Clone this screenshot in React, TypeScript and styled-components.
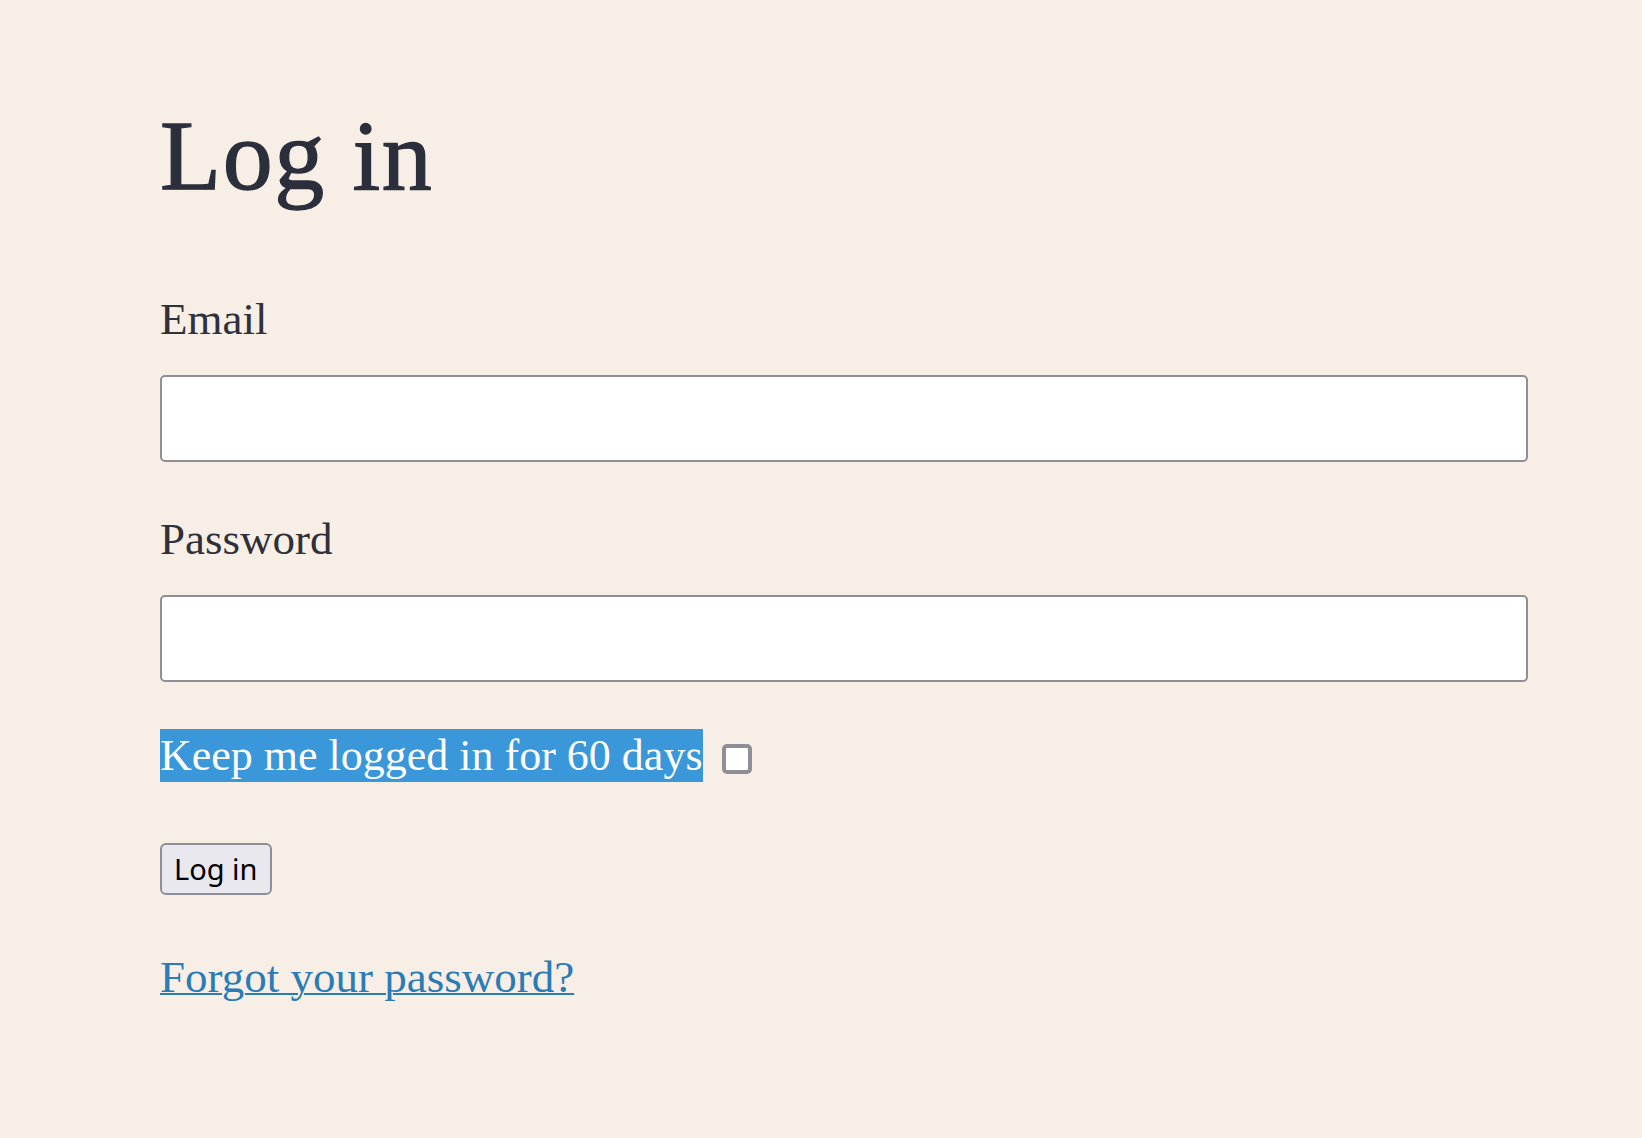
import React from "react";
import styled, { createGlobalStyle } from "styled-components";

const GlobalStyle = createGlobalStyle`
  html, body {
    margin: 0;
    padding: 0;
    background: #f7efe5;
  }
  body {
    font-family: "Liberation Serif", "Times New Roman", serif;
  }
`;

const Page = styled.main`
  min-height: 1138px;
  box-sizing: border-box;
  padding: 106px 114px 0 160px;
  background: #f7efe5;
`;

const Form = styled.form`
  display: flex;
  flex-direction: column;
  align-items: stretch;
`;

const Heading = styled.h1`
  margin: 0 0 87px;
  font-family: "Liberation Serif", "Times New Roman", serif;
  font-weight: 400;
  font-size: 100px;
  line-height: 100px;
  letter-spacing: 1.6px;
  color: #2b2f3c;
  -webkit-text-stroke: 1.3px #2b2f3c;
`;

const Field = styled.div<{ $gapAfter: number }>`
  display: flex;
  flex-direction: column;
  gap: 30px;
  margin-bottom: ${(p) => p.$gapAfter}px;
`;

const Label = styled.label`
  font-family: "Liberation Serif", "Times New Roman", serif;
  font-size: 45px;
  line-height: 52px;
  color: #2f3039;
`;

const TextInput = styled.input`
  box-sizing: border-box;
  height: 87px;
  width: 100%;
  border: 2px solid #8f8d97;
  border-radius: 5px;
  background: #ffffff;
  padding: 0 16px;
  font-size: 30px;
  outline: none;
`;

const KeepRow = styled.div`
  display: flex;
  align-items: center;
`;

const Selected = styled.label`
  display: inline-block;
  height: 53px;
  line-height: 53px;
  font-family: "Liberation Serif", "Times New Roman", serif;
  font-size: 44px;
  color: #ffffff;
  background: #3a97d9;
  white-space: nowrap;
`;

const CheckBox = styled.span`
  display: inline-block;
  box-sizing: border-box;
  width: 30px;
  height: 30px;
  margin-left: 19px;
  margin-top: 7px;
  border: 4px solid #8f8d97;
  border-radius: 5px;
  background: #ffffff;
`;

const ButtonRow = styled.div`
  display: flex;
  margin-top: 61px;
`;

const Button = styled.button`
  box-sizing: border-box;
  height: 52px;
  padding: 0 12px;
  border: 2px solid #8f8d97;
  border-radius: 6px;
  background: #e9e8ee;
  font-family: "Noto Sans", "DejaVu Sans", sans-serif;
  font-size: 29px;
  line-height: 48px;
  color: #000000;
`;

const ForgotLink = styled.a`
  align-self: flex-start;
  margin-top: 56px;
  font-family: "Liberation Serif", "Times New Roman", serif;
  font-size: 45px;
  line-height: 52px;
  color: #2b7bb6;
  text-decoration: underline;
  text-decoration-thickness: 2px;
`;

export default function App() {
  return (
    <>
      <GlobalStyle />
      <Page>
        <Form onSubmit={(e) => e.preventDefault()}>
          <Heading>Log in</Heading>
          <Field $gapAfter={51}>
            <Label htmlFor="email">Email</Label>
            <TextInput id="email" type="email" />
          </Field>
          <Field $gapAfter={47}>
            <Label htmlFor="password">Password</Label>
            <TextInput id="password" type="password" />
          </Field>
          <KeepRow>
            <Selected>Keep me logged in for 60 days</Selected>
            <CheckBox role="checkbox" aria-checked="false" />
          </KeepRow>
          <ButtonRow>
            <Button type="submit">Log in</Button>
          </ButtonRow>
          <ForgotLink href="#">Forgot your password?</ForgotLink>
        </Form>
      </Page>
    </>
  );
}
